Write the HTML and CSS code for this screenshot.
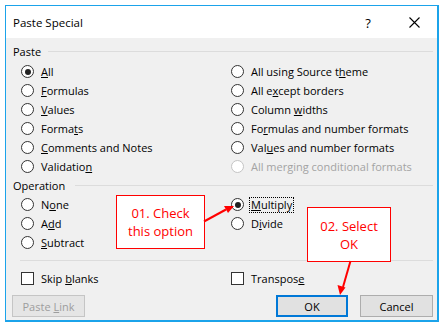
FILE: index.html
```html
<!DOCTYPE html>
<html>
<head>
  <title>Paste Special</title>
  <meta name="viewport" content="width=device-width, initial-scale=1.0">
  <link rel="stylesheet" href="styles.css">
</head>
<body>
  <div class="screen">
    <div class="dialog">
      <div class="titlebar">
        <span class="title">Paste Special</span>
        <span class="help">?</span>
        <span class="close">
          <svg width="11" height="11" viewBox="0 0 11 11"><path d="M0.5 0.5 L10.5 10.5 M10.5 0.5 L0.5 10.5" stroke="#000" stroke-width="1.1" fill="none"/></svg>
        </span>
      </div>

      <div class="content">
        <div class="group-label"><span>Paste</span><i></i></div>
        <div class="options paste-options">
          <label class="option"><span class="radio checked"></span><span><u>A</u>ll</span></label>
          <label class="option"><span class="radio"></span><span>All using Source t<u>h</u>eme</span></label>
          <label class="option"><span class="radio"></span><span><u>F</u>ormulas</span></label>
          <label class="option"><span class="radio"></span><span>All e<u>x</u>cept borders</span></label>
          <label class="option"><span class="radio"></span><span><u>V</u>alues</span></label>
          <label class="option"><span class="radio"></span><span>Column <u>w</u>idths</span></label>
          <label class="option"><span class="radio"></span><span>Forma<u>t</u>s</span></label>
          <label class="option"><span class="radio"></span><span>Fo<u>r</u>mulas and number formats</span></label>
          <label class="option"><span class="radio"></span><span><u>C</u>omments and Notes</span></label>
          <label class="option"><span class="radio"></span><span>Val<u>u</u>es and number formats</span></label>
          <label class="option"><span class="radio"></span><span>Validatio<u>n</u></span></label>
          <label class="option disabled"><span class="radio"></span><span>All mer<u>g</u>ing conditional formats</span></label>
        </div>

        <div class="group-label operation"><span>Operation</span><i></i></div>
        <div class="options">
          <label class="option"><span class="radio"></span><span>N<u>o</u>ne</span></label>
          <label class="option"><span class="radio checked"></span><span class="focused"><u>M</u>ultiply</span></label>
          <label class="option"><span class="radio"></span><span>A<u>d</u>d</span></label>
          <label class="option"><span class="radio"></span><span>D<u>i</u>vide</span></label>
          <label class="option"><span class="radio"></span><span><u>S</u>ubtract</span></label>
        </div>

        <div class="separator"></div>

        <div class="options checks">
          <label class="option"><span class="checkbox"></span><span>Skip <u>b</u>lanks</span></label>
          <label class="option"><span class="checkbox"></span><span>Transpos<u>e</u></span></label>
        </div>

        <div class="buttons">
          <button class="button" disabled>Paste <u>L</u>ink</button>
          <span class="spacer"></span>
          <button class="button default">OK</button>
          <button class="button">Cancel</button>
        </div>
      </div>
    </div>

    <!-- пометки поверх диалога -->
    <div class="callout callout-check">01. Check<br>this option</div>
    <div class="callout callout-ok">02. Select<br>OK</div>

    <svg class="arrows" width="448" height="329" viewBox="0 0 448 329">
      <line x1="204" y1="221.5" x2="226" y2="209.5" stroke="#f00" stroke-width="2"/>
      <polygon points="234,206 224,206 228,213" fill="#f00"/>
      <line x1="350.5" y1="261" x2="343" y2="287" stroke="#f00" stroke-width="2"/>
      <polygon points="340,295 337.5,285 345.5,287.5" fill="#f00"/>
    </svg>
  </div>
</body>
</html>
```

FILE: styles.css
```css
body {
  margin: 0;
  background-color: #fff;
  font-family: "Open Sans", "Liberation Sans", sans-serif;
  font-size: 11px;
  color: #000;
}

.screen {
  position: relative;
  width: 448px;
  height: 329px;
  overflow: hidden;
}

.dialog {
  box-sizing: border-box;
  margin: 5px 0 0 5px;
  width: 434px;
  height: 317px;
  border: solid #1ba3ea;
  border-width: 1px 2px 2px 1px;
  background-color: #f0f0f0;
}

.titlebar {
  display: flex;
  align-items: center;
  height: 32px;
  padding: 1px 0 0 7px;
  box-sizing: border-box;
  background-color: #fff;
}

.title {
  flex: 1;
  font-size: 11.5px;
}

.help {
  width: 46px;
  text-align: center;
  font-size: 13px;
}

.close {
  display: flex;
  justify-content: center;
  width: 46px;
}

.content {
  padding: 3px 4px 0 7px;
}

.group-label {
  display: flex;
  align-items: center;
  gap: 7px;
  height: 21px;
}

.group-label i {
  flex: 1;
  height: 1px;
  background-color: #dcdcdc;
}

.group-label.operation {
  height: 19px;
  gap: 10px;
}

.options {
  display: grid;
  grid-template-columns: 210px 1fr;
  grid-auto-rows: 19px;
  padding-left: 8px;
}

.option {
  display: flex;
  align-items: center;
  gap: 7px;
  white-space: nowrap;
}

.radio {
  box-sizing: border-box;
  display: flex;
  align-items: center;
  justify-content: center;
  width: 13px;
  height: 13px;
  border: 1px solid #333;
  border-radius: 50%;
  background-color: #fff;
}

.radio.checked::after {
  content: "";
  width: 6px;
  height: 6px;
  border-radius: 50%;
  background-color: #222;
}

.option.disabled {
  color: #a3a3a3;
}

.option.disabled .radio {
  border-color: #c4c4c4;
}

.focused {
  outline: 1px dotted #000;
  outline-offset: 0;
  padding: 0 1px;
  margin-left: -1px;
  line-height: 14px;
}

.checkbox {
  box-sizing: border-box;
  width: 13px;
  height: 13px;
  border: 1px solid #333;
  background-color: #fff;
}

.separator {
  height: 1px;
  margin: 8px 0 8px 7px;
  background-color: #dcdcdc;
}

.checks {
  padding-left: 8px;
}

.buttons {
  display: flex;
  gap: 12px;
  margin: 7px 0 0 -1px;
}

.spacer {
  flex: 1;
}

.button {
  box-sizing: border-box;
  width: 73px;
  height: 22px;
  padding: 0;
  font-family: inherit;
  font-size: 11px;
  color: #000;
  background-color: #e1e1e1;
  border: 1px solid #adadad;
}

.button.default {
  width: 72px;
  border: 2px solid #0078d7;
}

.button:disabled {
  color: #9d9d9d;
  background-color: #e5e5e5;
  border-color: #c5c5c5;
}

.callout {
  position: absolute;
  box-sizing: border-box;
  display: flex;
  align-items: center;
  justify-content: center;
  text-align: center;
  background-color: #fff;
  border: 1px solid #f00;
  color: #f00;
  font-size: 13px;
  line-height: 18px;
}

.callout-check {
  left: 116px;
  top: 195px;
  width: 89px;
  height: 54px;
}

.callout-ok {
  left: 307px;
  top: 207px;
  width: 84px;
  height: 55px;
}

.arrows {
  position: absolute;
  left: 0;
  top: 0;
  pointer-events: none;
}
```
